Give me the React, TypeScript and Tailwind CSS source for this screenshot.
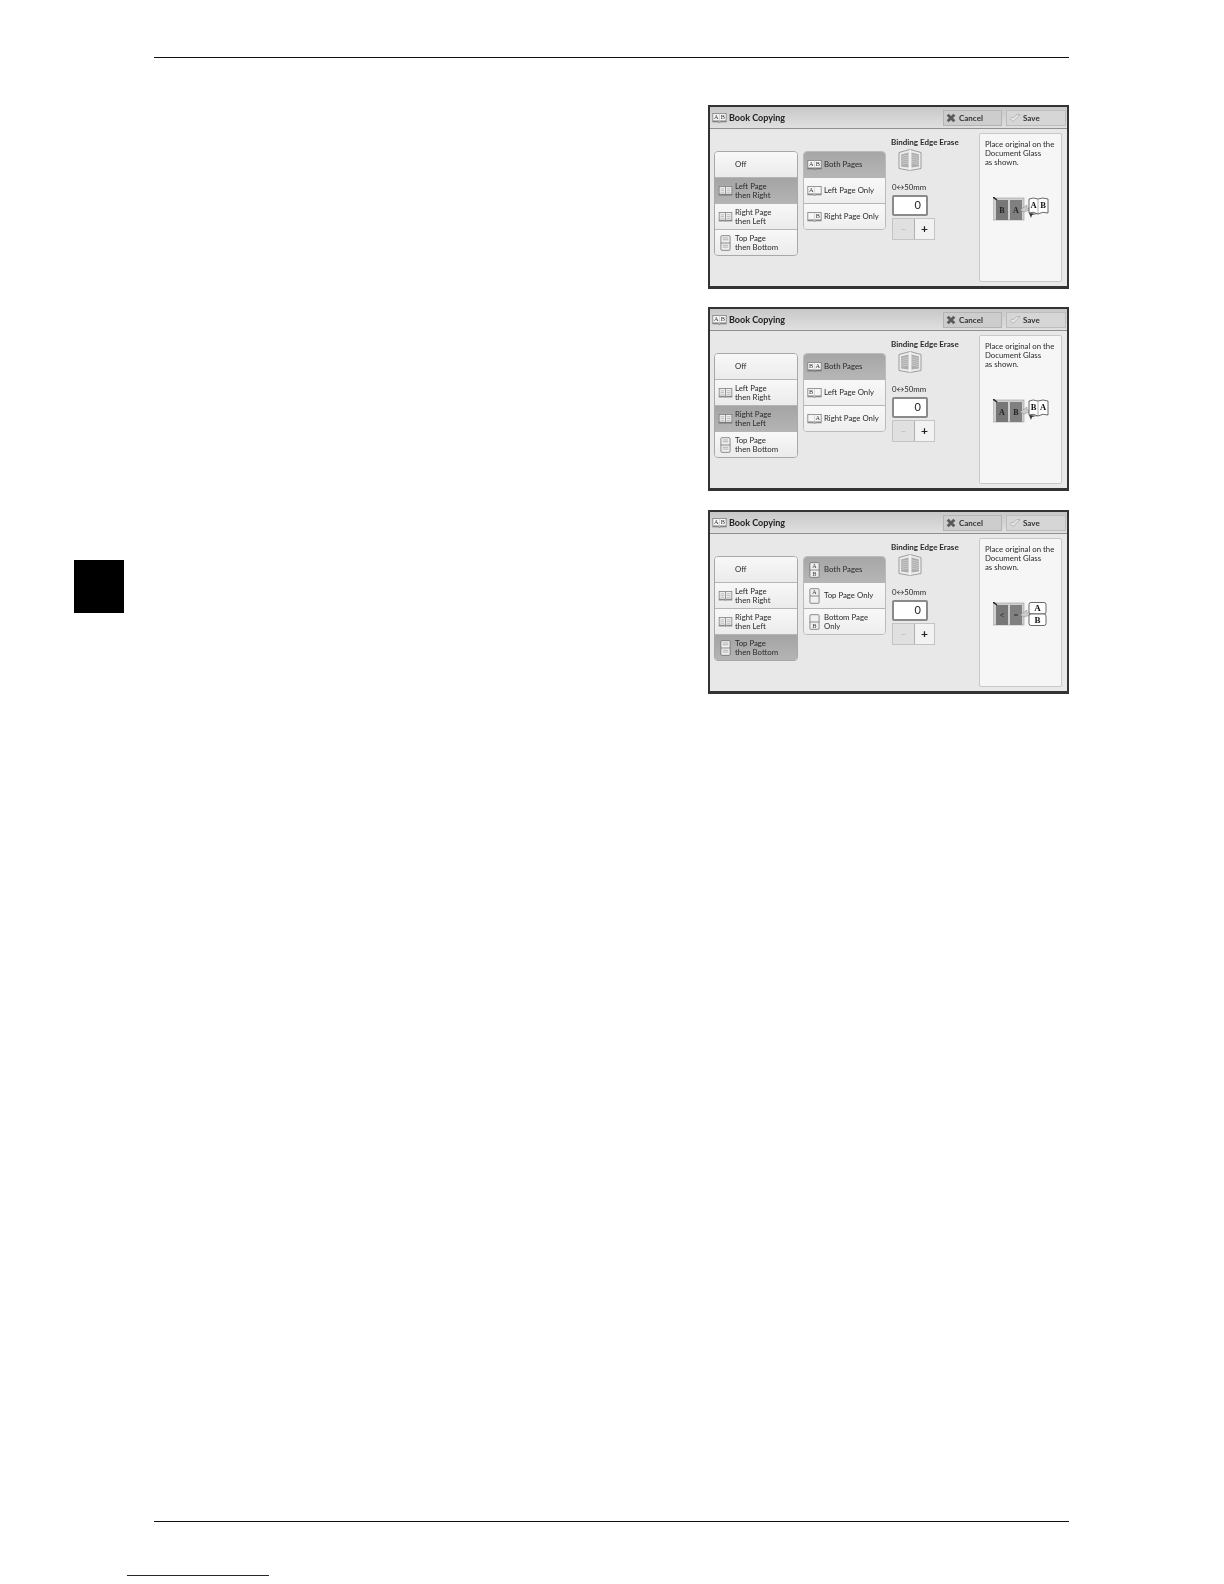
import React from 'react'

type Mode = 'lr' | 'rl' | 'tb'

type BookIconProps = {
  left?: string
  right?: string
  className?: string
}

// little open book with letters on the pages
const BookIcon: React.FC<BookIconProps> = ({ left = '', right = '', className }) => (
  <svg viewBox="0 0 18 12" width={15} height={10} className={className}>
    <rect x="1" y="0.5" width="16" height="9" fill="#f6f6f6" stroke="#777" strokeWidth="0.9" />
    <line x1="9" y1="0.5" x2="9" y2="9.5" stroke="#bbb" strokeWidth="0.6" />
    <path d="M0.5 10.5 H7.5 L9 11.5 L10.5 10.5 H17.5" fill="none" stroke="#555" strokeWidth="0.9" />
    <text x="5" y="7.6" fontSize="7.5" textAnchor="middle" fill="#333" fontFamily="Liberation Serif, serif">
      {left}
    </text>
    <text x="13" y="7.6" fontSize="7.5" textAnchor="middle" fill="#333" fontFamily="Liberation Serif, serif">
      {right}
    </text>
  </svg>
)

const LinesBook: React.FC = () => (
  <svg viewBox="0 0 16 11" width={15} height={10}>
    <rect x="1" y="0.5" width="14" height="8.5" fill="#ededed" stroke="#777" strokeWidth="0.8" />
    <line x1="8" y1="0.5" x2="8" y2="9" stroke="#777" strokeWidth="0.8" />
    <path d="M2.5 3h4M2.5 5h4M2.5 7h4M9.500 3h4M9.500 5h4M9.500 7h4" stroke="#aaa" strokeWidth="0.7" />
    <path d="M0.5 9.8 H7 L8 10.6 L9 9.8 H15.5" fill="none" stroke="#555" strokeWidth="0.8" />
  </svg>
)

const TopBottomPages: React.FC<{ top?: string; bottom?: string; lines?: boolean }> = ({ top = '', bottom = '', lines }) => (
  <svg viewBox="0 0 12 17" width={11} height={16}>
    <rect x="1" y="0.5" width="10" height="16" rx="1" fill="#f0f0f0" stroke="#666" strokeWidth="0.8" />
    <line x1="1" y1="8.5" x2="11" y2="8.5" stroke="#666" strokeWidth="0.8" />
    {lines && <path d="M3 3h6M3 5h6M3 11h6M3 13h6" stroke="#999" strokeWidth="0.8" />}
    <text x="6" y="6.8" fontSize="6.5" textAnchor="middle" fill="#333" fontFamily="Liberation Serif, serif">
      {top}
    </text>
    <text x="6" y="15" fontSize="6.5" textAnchor="middle" fill="#333" fontFamily="Liberation Serif, serif">
      {bottom}
    </text>
  </svg>
)

const ModeRow: React.FC<{ label: string[]; selected?: boolean; icon?: React.ReactNode }> = ({ label, selected, icon }) => (
  <div
    className={`flex min-h-0 flex-1 items-center border-b border-[#b5b5b5] last:border-b-0 ${
      selected ? 'bg-gradient-to-b from-[#a4a4a4] to-[#b4b4b4]' : 'bg-gradient-to-b from-[#f8f8f8] to-[#ebebeb]'
    }`}
  >
    <div className="flex w-[20px] shrink-0 justify-center">{icon}</div>
    <div className="text-[7.8px] leading-[8.5px] text-[#2a2a2a]">
      {label.map((l) => (
        <div key={l}>{l}</div>
      ))}
    </div>
  </div>
)

const PagesRow: React.FC<{ label: string[]; selected?: boolean; icon: React.ReactNode }> = ({ label, selected, icon }) => (
  <div
    className={`flex min-h-0 flex-1 items-center border-b border-[#b5b5b5] last:border-b-0 ${
      selected ? 'bg-gradient-to-b from-[#a6a6a6] to-[#b6b6b6]' : 'bg-gradient-to-b from-[#f8f8f8] to-[#eeeeee]'
    }`}
  >
    <div className="flex w-[20px] shrink-0 justify-center">{icon}</div>
    <div className="text-[7.8px] leading-[9px] text-[#2a2a2a]">
      {label.map((l) => (
        <div key={l}>{l}</div>
      ))}
    </div>
  </div>
)

// the picture in the right panel: pages on the glass + book
const GlassPicture: React.FC<{ mode: Mode }> = ({ mode }) => {
  const glass = mode === 'lr' ? ['B', 'A'] : mode === 'rl' ? ['A', 'B'] : ['<', '=']
  return (
    <svg viewBox="0 0 56 24" width={56} height={24}>
      <rect x="0" y="1" width="31" height="22" fill="#d0d0d0" stroke="#999" strokeWidth="0.6" />
      <rect x="3" y="3" width="12" height="20" fill="#777" />
      <rect x="17" y="3" width="12" height="20" fill="#808080" />
      <path d="M0 0 L4 3" stroke="#222" strokeWidth="1.4" />
      <text x="9" y="16" fontSize="8" textAnchor="middle" fill="#222" fontFamily="Liberation Serif, serif" fontWeight="700">
        {glass[0]}
      </text>
      <text x="23" y="16" fontSize="8" textAnchor="middle" fill="#222" fontFamily="Liberation Serif, serif" fontWeight="700">
        {glass[1]}
      </text>
      <path d="M27 13 L34 8 L34 11 L37 11 L37 13 L31 15 Z" fill="#ccc" stroke="#777" strokeWidth="0.4" />
      {mode === 'tb' ? (
        <>
          <rect x="36" y="0.5" width="17" height="11.500" rx="2" fill="#fff" stroke="#444" strokeWidth="0.8" />
          <rect x="36" y="12" width="17" height="11.500" rx="2" fill="#fff" stroke="#444" strokeWidth="0.8" />
          <text x="44.500" y="9" fontSize="9" textAnchor="middle" fill="#111" fontFamily="Liberation Serif, serif" fontWeight="700">
            A
          </text>
          <text x="44.500" y="21" fontSize="9" textAnchor="middle" fill="#111" fontFamily="Liberation Serif, serif" fontWeight="700">
            B
          </text>
        </>
      ) : (
        <>
          <path d="M36 2 Q40 0 45 2 Q50 0 55 2 L55 16 Q50 14 45 17 Q40 14 36 16 Z" fill="#fff" stroke="#444" strokeWidth="0.8" />
          <path d="M36 16 L38 21 L39 18 Q42 17 45 17" fill="#333" />
          <line x1="45" y1="2" x2="45" y2="17" stroke="#777" strokeWidth="0.6" />
          <text x="40.500" y="11" fontSize="8.500" textAnchor="middle" fill="#111" fontFamily="Liberation Serif, serif" fontWeight="700">
            {mode === 'lr' ? 'A' : 'B'}
          </text>
          <text x="50" y="11" fontSize="8.500" textAnchor="middle" fill="#111" fontFamily="Liberation Serif, serif" fontWeight="700">
            {mode === 'lr' ? 'B' : 'A'}
          </text>
        </>
      )}
    </svg>
  )
}

const EraseBook: React.FC = () => (
  <svg viewBox="0 0 26 23" width={26} height={24}>
    <path d="M2 4 L13 1 L24 4 L24 20 L13 22 L2 20 Z" fill="#ececec" stroke="#8a8a8a" strokeWidth="0.8" />
    <path d="M4 6 L11.500 4 L11.500 19 L4 18 Z M22 6 L14.500 4 L14.500 19 L22 18 Z" fill="#adadad" />
    <path d="M4 8l7.500-1.500M4 10l7.500-1.500M4 12l7.500-1.500M4 14l7.500-1.500M4 16l7.500-1.500M22 8l-7.500-1.500M22 10l-7.500-1.500M22 12l-7.500-1.500M22 14l-7.500-1.500M22 16l-7.500-1.500" stroke="#dcdcdc" strokeWidth="0.6" />
    <line x1="13" y1="1" x2="13" y2="22" stroke="#f5f5f5" strokeWidth="1.2" />
  </svg>
)

const BookCopyingScreen: React.FC<{ mode: Mode; className?: string }> = ({ mode, className = '' }) => {
  const pagesRows =
    mode === 'lr'
      ? [
          { label: ['Both Pages'], icon: <BookIcon left="A" right="B" /> },
          { label: ['Left Page Only'], icon: <BookIcon left="A" /> },
          { label: ['Right Page Only'], icon: <BookIcon right="B" /> },
        ]
      : mode === 'rl'
        ? [
            { label: ['Both Pages'], icon: <BookIcon left="B" right="A" /> },
            { label: ['Left Page Only'], icon: <BookIcon left="B" /> },
            { label: ['Right Page Only'], icon: <BookIcon right="A" /> },
          ]
        : [
            { label: ['Both Pages'], icon: <TopBottomPages top="A" bottom="B" /> },
            { label: ['Top Page Only'], icon: <TopBottomPages top="A" /> },
            { label: ['Bottom Page', 'Only'], icon: <TopBottomPages bottom="B" /> },
          ]

  return (
    <div
      className={`flex h-[184px] w-[361px] flex-col border-2 border-b-[3px] border-[#333] bg-[#e8e8e8] blur-[0.45px] [font-family:Lato,sans-serif] ${className}`}
    >
      <div className="flex h-[22px] shrink-0 items-center border-b border-[#8f8f8f] bg-gradient-to-b from-[#c8c8c8] to-[#e0e0e0] pl-[2px]">
        <BookIcon left="A" right="B" />
        <span className="ml-[2px] text-[9px] font-bold text-[#222]">Book Copying</span>
        <div className="ml-auto flex h-full items-center gap-[4px] pr-[1px]">
          <div className="flex h-[16px] w-[59px] items-center gap-[3px] border border-[#b4b4b4] bg-[#cdcdcd] pl-[2px] text-[8px] font-bold text-[#333]">
            <svg viewBox="0 0 12 12" width={10} height={10}>
              <path d="M2 2 L10 10 M10 2 L2 10" stroke="#5a5a5a" strokeWidth="3.4" />
            </svg>
            Cancel
          </div>
          <div className="flex h-[16px] w-[60px] items-center gap-[2px] border border-[#bdbdbd] bg-[#d6d6d6] pl-[2px] text-[8px] font-bold text-[#333]">
            <svg viewBox="0 0 14 12" width={12} height={10}>
              <path d="M1 7 L5 10 L13 2 L9 2 L5 6 L3 5 Z" fill="#e8e8e8" stroke="#999" strokeWidth="0.7" />
            </svg>
            Save
          </div>
        </div>
      </div>
      <div className="flex min-h-0 flex-1 px-[4px] pt-[4px] pb-[4px]">
        <div className="mt-[18px] flex h-[105px] w-[84px] shrink-0 flex-col overflow-hidden rounded-[4px] border border-[#a8a8a8]">
          <ModeRow label={['Off']} />
          <ModeRow label={['Left Page', 'then Right']} selected={mode === 'lr'} icon={<LinesBook />} />
          <ModeRow label={['Right Page', 'then Left']} selected={mode === 'rl'} icon={<LinesBook />} />
          <ModeRow label={['Top Page', 'then Bottom']} selected={mode === 'tb'} icon={<TopBottomPages lines />} />
        </div>
        <div className="ml-[5px] mt-[18px] flex h-[79px] w-[83px] shrink-0 flex-col overflow-hidden rounded-[4px] border border-[#bbb]">
          {pagesRows.map((r, i) => (
            <PagesRow key={i} label={r.label} icon={r.icon} selected={i === 0} />
          ))}
        </div>
        <div className="ml-[5px] flex w-[88px] shrink-0 flex-col">
          <div className="mt-[4.500px] text-[8px] leading-[9px] font-bold whitespace-nowrap text-[#2a2a2a]">Binding Edge Erase</div>
          <div className="ml-[6px] mt-[1.500px]">
            <EraseBook />
          </div>
          <div className="ml-[1px] mt-[10.500px] text-[7.800px] leading-[9px] text-[#2a2a2a]">0↔50mm</div>
          <div className="ml-[1px] mt-[3.500px] flex h-[21px] w-[36px] items-center justify-end rounded-[2px] border-2 border-[#8a8a8a] bg-white pr-[5px] text-[11px] text-[#222]">
            0
          </div>
          <div className="ml-[1px] mt-[2px] flex h-[22px] w-[43px] border border-[#c4c4c4]">
            <div className="flex w-[22px] items-center justify-center border-r border-[#b0b0b0] bg-[#e0e0e0] text-[10px] text-[#bbb]">
              −
            </div>
            <div className="flex flex-1 items-center justify-center bg-[#f2f2f2] text-[12px] font-bold text-[#222]">+</div>
          </div>
        </div>
        <div className="flex w-[83px] shrink-0 flex-col items-center rounded-[2px] border border-[#c8c8c8] bg-[#f6f6f6]">
          <div className="w-full pl-[5px] pt-[5.500px] text-[7.800px] leading-[9px] whitespace-nowrap text-[#2a2a2a]">
            <div>Place original on the</div>
            <div>Document Glass</div>
            <div>as shown.</div>
          </div>
          <div className="mt-[30px]">
            <GlassPicture mode={mode} />
          </div>
        </div>
      </div>
    </div>
  )
}

export default function App() {
  return (
    <div className="flex h-[1584px] w-[1224px] flex-col bg-white">
      <div className="ml-[154px] mt-[57px] h-[1px] w-[915px] shrink-0 bg-[#111]" />
      <div className="flex h-[1463px] shrink-0">
        <div className="ml-[74px] mt-[502px] h-[53px] w-[50px] shrink-0 bg-black" />
        <div className="ml-[584px] mt-[47px] flex flex-col">
          <BookCopyingScreen mode="lr" />
          <BookCopyingScreen mode="rl" className="mt-[18px]" />
          <BookCopyingScreen mode="tb" className="mt-[19px]" />
        </div>
      </div>
      <div className="ml-[154px] h-[1px] w-[915px] shrink-0 bg-[#111]" />
      <div className="ml-[127px] mt-[53px] h-[1px] w-[142px] shrink-0 bg-[#1a1a8c]" />
    </div>
  )
}
